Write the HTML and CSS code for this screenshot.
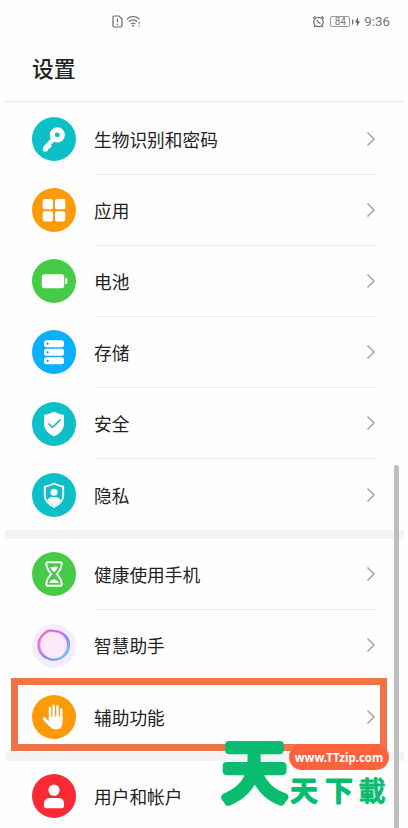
FILE: index.html
```html
<!DOCTYPE html>
<html lang="zh-CN">
<head>
<meta charset="utf-8">
<title>设置</title>
<link rel="stylesheet" href="styles.css">
</head>
<body>
<svg class="defs" width="0" height="0">
  <symbol id="chev" viewBox="0 0 10 16"><path d="M1.500 1.500 8 8l-6.500 6.500" fill="none" stroke="#aaa" stroke-width="1.700"/></symbol>
</svg>
<main class="phone">
  <header class="status">
    <svg class="sim" viewBox="0 0 11 13"><path d="M1 2.200Q1 1 2.200 1H7l3 3v6.800Q10 12 8.800 12H2.200Q1 12 1 10.800ZM5.500 3.500v3.800M5.500 8.700v1.300" fill="none" stroke="#666" stroke-width="1.200"/></svg>
    <svg class="wifi" viewBox="0 0 15 13"><path d="M.8 4.300Q7-1.400 13.500 4.300M2.800 6.700Q7 3 11.300 6.700M4.900 8.900Q7 7.200 9.300 8.900" fill="none" stroke="#777" stroke-width="1.200"/><circle cx="7" cy="10.700" r="1" fill="#777"/><path d="M13.200 6.500v3M13.200 10.500v1.300" stroke="#777"/></svg>
    <svg class="alarm" viewBox="0 0 13 13"><circle cx="6.500" cy="7" r="4.700" fill="none" stroke="#666" stroke-width="1.200"/><path d="M1 3.500 3.500 1.200M12 3.500 9.500 1.200M5 5.200l1.600 2.300 1.900 1M3 11l-1 1.200M10 11l1 1.200" fill="none" stroke="#666" stroke-width="1.200"/></svg>
    <span class="battery">84</span>
    <svg class="bolt" viewBox="0 0 8 10"><path d="M0 2.500h1.400v5H0Z" fill="#777"/><path d="M6 0 3 5.500h2L4.600 10 8 4.300H6Z" fill="#666"/></svg>
    <time>9:36</time>
  </header>
  <h1>设置</h1>
  <div class="band thin"></div>
  <section>
    <div class="row"><svg class="icon teal" viewBox="0 0 44 44"><circle cx="25.300" cy="17.800" r="5" fill="none" stroke="#fff" stroke-width="5.200"/><path d="M21.500 22 13.500 30.500" stroke="#fff" stroke-width="4.200"/><path d="M11 30l6-4 3 3-2.500 2.500-1 .2-.5 1.800-1.300 1h-3.500Z" fill="#fff"/></svg><div class="label"><span>生物识别和密码</span><svg class="chev"><use href="#chev"/></svg></div></div>
    <div class="row"><svg class="icon orange" viewBox="0 0 44 44"><g fill="#fff"><rect x="10.700" y="11" width="10.300" height="10.300" rx="1.700"/><rect x="23" y="11" width="10.300" height="10.300" rx="1.700"/><rect x="10.700" y="23.200" width="10.300" height="10.300" rx="1.700"/><rect x="23" y="23.200" width="10.300" height="10.300" rx="1.700"/></g></svg><div class="label"><span>应用</span><svg class="chev"><use href="#chev"/></svg></div></div>
    <div class="row"><svg class="icon green" viewBox="0 0 44 44"><rect x="9.800" y="15.200" width="22.400" height="14" rx="2.600" fill="#fff"/><path d="M33.300 19h1q1 0 1 1v4q0 1-1 1h-1Z" fill="#fff"/></svg><div class="label"><span>电池</span><svg class="chev"><use href="#chev"/></svg></div></div>
    <div class="row"><svg class="icon blue" viewBox="0 0 44 44"><g fill="#fff"><rect x="12" y="10.300" width="20" height="7" rx="2.500"/><rect x="12" y="18.800" width="20" height="7" rx="2.500"/><rect x="12" y="27.300" width="20" height="7" rx="2.500"/></g><g fill="#087ba8"><circle cx="15.600" cy="13.800" r="1"/><circle cx="15.600" cy="22.300" r="1"/><circle cx="15.600" cy="30.800" r="1"/></g></svg><div class="label"><span>存储</span><svg class="chev"><use href="#chev"/></svg></div></div>
    <div class="row"><svg class="icon teal" viewBox="0 0 44 44"><path d="M22 9.800Q27 12.200 32 13v9.500Q31.500 30 22 34.500 12.500 30 12 22.500V13Q17 12.200 22 9.800Z" fill="#fff"/><path d="m16.500 21.500 4 4 8-8" fill="none" stroke="#1bafb1" stroke-width="1.500"/></svg><div class="label"><span>安全</span><svg class="chev"><use href="#chev"/></svg></div></div>
    <div class="row"><svg class="icon teal" viewBox="0 0 44 44"><path d="M22 10.500Q27 13 31.200 13.700v8.800Q31 29.500 22 34 13 29.500 12.800 22.500v-8.800Q17 13 22 10.500Z" fill="none" stroke="#fff" stroke-width="1.900"/><circle cx="22" cy="19.300" r="3.500" fill="#fff"/><path d="M15.300 27q2-3 4.700-3h4q2.700 0 4.700 3-2 3.500-6.700 6-4.700-2.500-6.700-6Z" fill="#fff"/></svg><div class="label last"><span>隐私</span><svg class="chev"><use href="#chev"/></svg></div></div>
  </section>
  <div class="band"></div>
  <section>
    <div class="row"><svg class="icon green" viewBox="0 0 44 44"><path d="M15.500 10.300h13q1.300 0 1.200 1.500c-.2 5-2.500 7.500-4.900 10.200 2.400 2.700 4.700 5.200 4.900 10.200q.1 1.500-1.200 1.500h-13q-1.300 0-1.200-1.500c.2-5 2.500-7.500 4.900-10.200-2.400-2.700-4.700-5.200-4.900-10.200q-.1-1.500 1.200-1.500Z" fill="none" stroke="#fff" stroke-width="1.900"/><path d="M18 15q2 .5 4-.2t4 .2Q25 18 22 20.200 19 18 18 15ZM17 31q1.500-3 5-3.700 3.500.7 5 3.700Z" fill="#fff"/></svg><div class="label"><span>健康使用手机</span><svg class="chev"><use href="#chev"/></svg></div></div>
    <div class="row"><svg class="icon halo" viewBox="0 0 44 44"><defs><linearGradient id="ring" x1=".1" y1="0" x2=".9" y2=".9"><stop offset="0" stop-color="#ee5fb8"/><stop offset=".35" stop-color="#cb68e6"/><stop offset=".65" stop-color="#7580ee"/><stop offset="1" stop-color="#5bbdec"/></linearGradient></defs><g fill="none" stroke="url(#ring)"><path d="M13 8.500C17 4 22 7 27 7.500c7 2 11 8 10.300 14.500C37 30 30 35.500 22 36 13 36 6.500 30 6 22 5 16 9 13 13 8.500Z" stroke-width="1.200"/><path d="M20 6.800c9-.2 16 6.200 16 14.200 0 8-6 14.500-14 14.500S7.500 29 7.200 21.500 12 7 20 6.800Z" stroke-width="2.200" opacity=".75"/></g></svg><div class="label last"><span>智慧助手</span><svg class="chev"><use href="#chev"/></svg></div></div>
    <div class="row"><svg class="icon orange" viewBox="0 0 44 44"><g stroke="#fff" stroke-linecap="round" stroke-width="2.500" fill="none"><path d="M18 23.500V13M21.700 23V10.800M25.500 23V11.500M29.200 24V14.500"/><path d="m12.200 23.600 6 6.400" stroke-width="3"/></g><path d="M16.800 21.500h13.700V27q0 7.500-6.500 7.500-4 0-6.500-3.500l-4-6 3.300 1Z" fill="#fff"/></svg><div class="label last"><span>辅助功能</span><svg class="chev"><use href="#chev"/></svg></div></div>
  </section>
  <div class="band"></div>
  <section>
    <div class="row"><svg class="icon red" viewBox="0 0 44 44"><circle cx="22" cy="16.200" r="5.600" fill="#fff"/><path d="M12 32v-2.500q0-5.500 6-5.500h8q6 0 6 5.500V32q0 2.300-2.300 2.300H14.300Q12 34.300 12 32Z" fill="#fff"/></svg><div class="label last"><span>用户和帐户</span></div></div>
  </section>
  <div class="scrollbar"></div>
  <div class="highlight"></div>
  <div class="watermark">
    <svg viewBox="0 0 170 72">
      <g class="brand"><text class="big" transform="translate(2.500 59) scale(1 1.030)">天</text><text class="small" x="70.500" y="64">天</text><text class="small" x="105.500" y="64">下</text><text class="small dense" x="138.500" y="64">載</text></g>
    </svg>
    <span class="site">www.TTzip.com</span>
  </div>
</main>
</body>
</html>
```
FILE: styles.css
```css
* { box-sizing: border-box; }
body { margin: 0; background: #fff; overflow: hidden; font-family: "Noto Sans CJK SC", sans-serif; color: #222; }
.defs { position: absolute; }
.phone { position: relative; width: 408px; height: 828px; overflow: hidden; background: #fefefe; }
.status { display: flex; align-items: center; height: 43px; padding: 0 18px 0 112px; color: #777; }
.sim { width: 11px; height: 13px; }
.wifi { width: 15px; height: 13px; margin-left: 3px; }
.alarm { width: 13px; height: 13px; margin-left: auto; }
.battery { width: 20px; height: 11px; margin-left: 5px; border: 1px solid #999; border-radius: 2px; font: 10px/10px Roboto, sans-serif; text-align: center; }
.bolt { width: 8px; height: 10px; margin-left: 2px; }
.status time { margin-left: 4px; font: 13.300px/16px Roboto, sans-serif; }
h1 { margin: 0; height: 56.500px; padding-left: 32px; font-size: 21.800px; font-weight: 500; line-height: 50px; }
.band { height: 8.600px; margin: 0 4px 0 5px; background: #f3f3f3; }
.band.thin { height: 3.900px; }
.row { display: flex; align-items: center; height: 71.150px; padding: 0 30px 0 32px; }
.icon { flex: none; width: 44px; height: 44px; border-radius: 50%; }
.teal { background: #0dbfc6; }
.orange { background: #fd9a07; }
.green { background: #45cb45; }
.blue { background: #0aaffd; }
.red { background: #f92a35; }
.halo { background: radial-gradient(circle, #fae8fb 40%, #f5edfb 65%, #f7f5fd); }
.label { display: flex; flex: 1; align-items: center; justify-content: space-between; height: 100%; margin-left: 18px; padding: .8px 2px 0 0; border-bottom: 1px solid #ededed; font-size: 17.700px; line-height: 26px; }
.label.last { border-color: transparent; }
.chev { width: 10px; height: 16px; }
.scrollbar { position: absolute; left: 394px; top: 465px; width: 4.500px; height: 370px; border-radius: 2px; background: #bebebe; }
.highlight { position: absolute; left: 11px; top: 678px; width: 376px; height: 73px; border: 7px solid #f17349; }
.watermark { position: absolute; left: 220px; top: 737px; width: 170px; height: 72px; }
.watermark svg { display: block; width: 170px; height: 72px; overflow: visible; }
.brand { font-family: "Noto Sans CJK TC", sans-serif; font-weight: 500; fill: #08bd70; stroke: #08bd70; stroke-linejoin: round; }
.big { font-size: 64px; font-weight: 400; stroke-width: 8px; }
.small { font-size: 27px; stroke-width: 2px; }
.small.dense { stroke-width: 1px; }
.site { position: absolute; left: 69px; top: 7px; width: 100px; height: 26px; border-radius: 13px; background: #fd623c; color: #fff; font: 700 11.500px/27px "Noto Sans", sans-serif; text-align: center; }
```
